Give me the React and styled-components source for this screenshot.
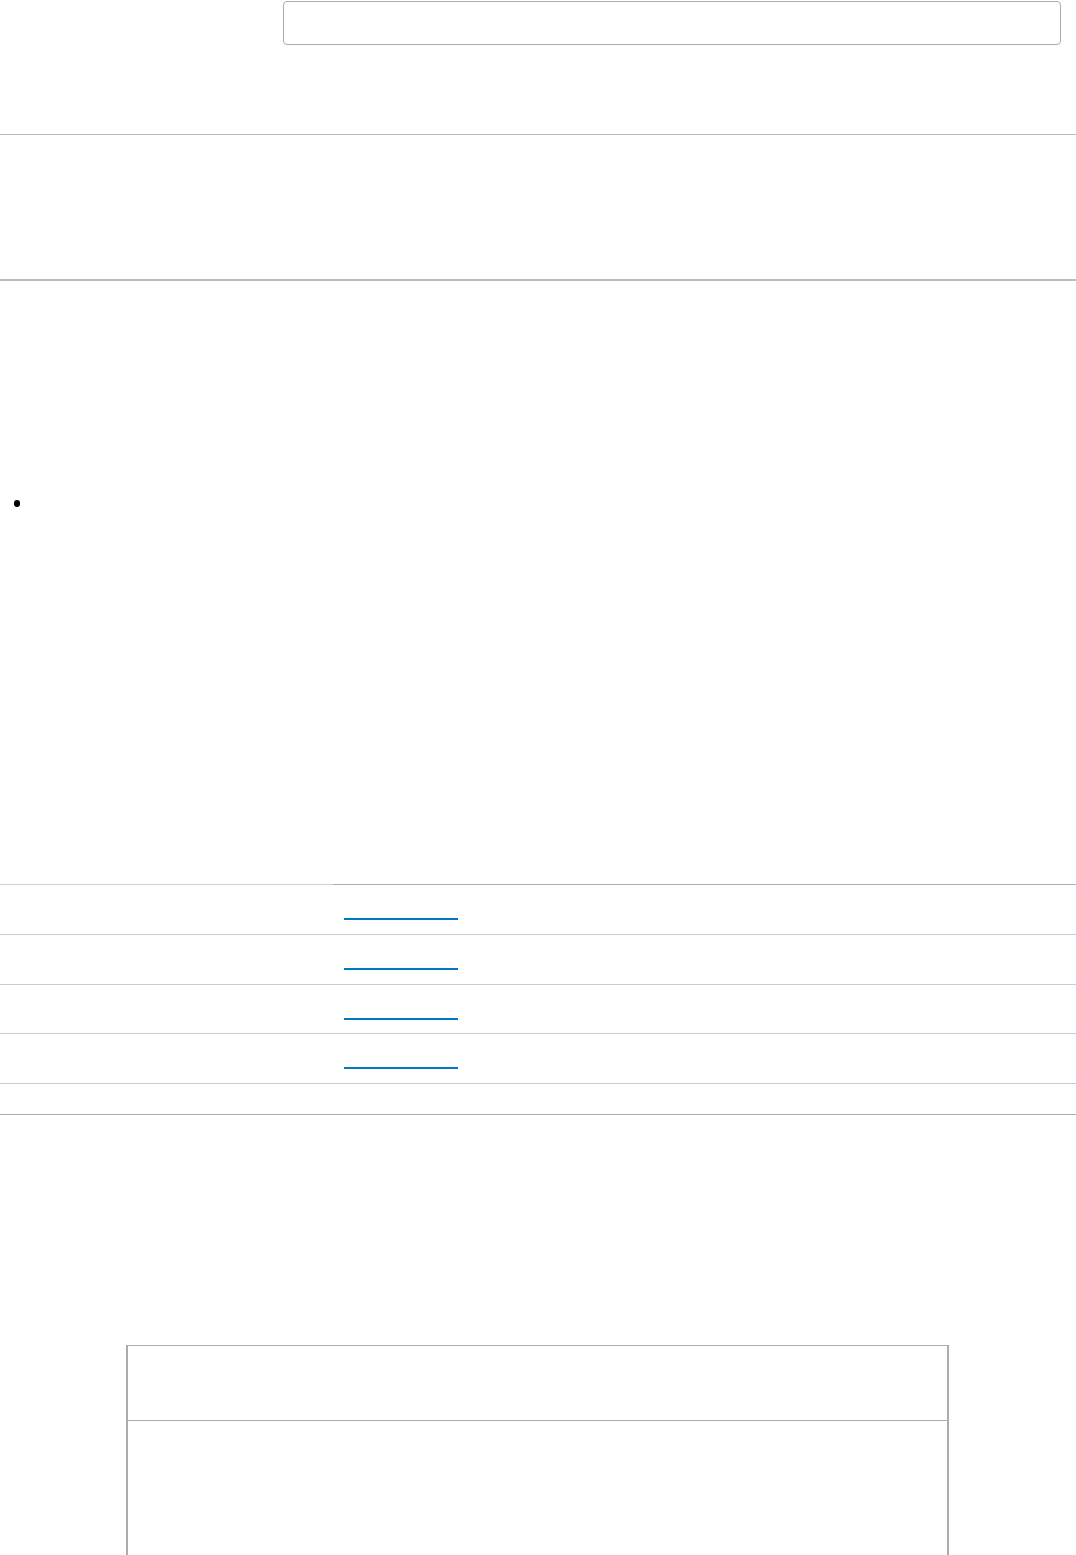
import React from 'react';
import styled, { createGlobalStyle } from 'styled-components';

const GlobalStyle = createGlobalStyle`
  html, body {
    margin: 0;
    padding: 0;
    background: #ffffff;
    font-family: "Liberation Sans", Arial, sans-serif;
    font-size: 16px;
    color: #222;
  }
`;

const Page = styled.div`
  width: 1076px;
  display: flex;
  flex-direction: column;
`;

const Header = styled.header`
  height: 135px;
  padding: 1px 15px 0 283px;
  box-sizing: border-box;
  border-bottom: 1px solid #bcbcbc;
`;

const SearchInput = styled.input`
  display: block;
  width: 778px;
  height: 44px;
  box-sizing: border-box;
  border: 1px solid #a9adb2;
  border-radius: 4px;
  background: #fff;
  outline: none;
  font: inherit;
`;

const Band = styled.section`
  height: 144px;
  border-bottom: 2px solid #bcbcbc;
`;

const Content = styled.main`
  padding-top: 212px;
`;

const List = styled.ul`
  margin: 0;
  padding: 0;
  list-style: none;
`;

const Item = styled.li`
  display: flex;
  align-items: center;
  height: 21px;
  padding-left: 13.5px;

  &::before {
    content: '';
    width: 6.5px;
    height: 6.5px;
    border-radius: 50%;
    background: #000;
  }
`;

const Table = styled.table`
  margin-top: 370px;
  width: 100%;
  border-collapse: collapse;
`;

const HeadCell = styled.th`
  height: 0;
  padding: 0;
  border-top: 1px solid ${({ light }) => (light ? '#ced3d7' : '#a9aeb3')};
`;

const Row = styled.tr`
  border-bottom: 1px solid #c9ccd0;
`;

const Cell = styled.td`
  width: ${({ wide }) => (wide ? 'auto' : '333px')};
  height: 49.5px;
  padding: 0 0 0 11px;
  box-sizing: border-box;
  vertical-align: top;
`;

const LinkLine = styled.a`
  display: block;
  width: 114px;
  height: 35px;
  box-sizing: border-box;
  border-bottom: 2px solid #0079c2;
`;

const Foot = styled.div`
  height: 30px;
  border-bottom: 1px solid #acacac;
`;

const Panel = styled.div`
  margin: 230px 0 0 126px;
  width: 823px;
  box-sizing: border-box;
  border: 1px solid #acacac;
  border-left-width: 2px;
  border-right-width: 2px;
`;

const PanelHead = styled.div`
  height: 74px;
  border-bottom: 1px solid #acacac;
`;

const PanelBody = styled.div`
  height: 240px;
`;

const rows = [1, 2, 3, 4];

export default function App() {
  return (
    <>
      <GlobalStyle />
      <Page>
        <Header>
          <SearchInput type="text" aria-label="search" />
        </Header>
        <Band />
        <Content>
          <List>
            <Item />
          </List>
        </Content>
        <Table>
          <thead>
            <tr>
              <HeadCell light />
              <HeadCell />
            </tr>
          </thead>
          <tbody>
            {rows.map((r) => (
              <Row key={r}>
                <Cell />
                <Cell wide>
                  <LinkLine href="#" aria-label={`link ${r}`} />
                </Cell>
              </Row>
            ))}
          </tbody>
        </Table>
        <Foot />
        <Panel>
          <PanelHead />
          <PanelBody />
        </Panel>
      </Page>
    </>
  );
}
